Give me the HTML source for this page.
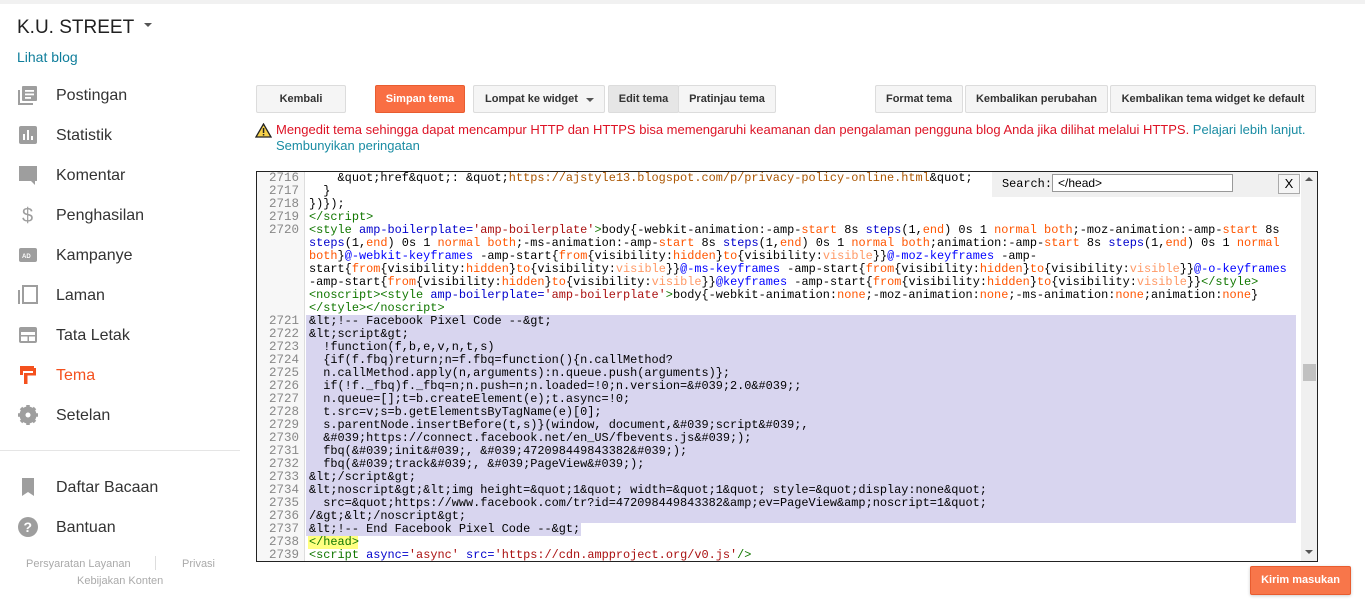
<!DOCTYPE html>
<html><head><meta charset="utf-8">
<style>
*{margin:0;padding:0;box-sizing:border-box}
body{width:1365px;height:599px;overflow:hidden;background:#fff;font-family:"Liberation Sans",Arial,sans-serif;position:relative}
.topstrip{position:absolute;left:0;top:0;width:1365px;height:4px;background:#f1f1f1}
.brand{position:absolute;left:17px;top:17px;font-size:19px;color:#212121}
.brand .car{display:inline-block;margin-left:10px;vertical-align:middle;width:0;height:0;border-left:4px solid transparent;border-right:4px solid transparent;border-top:4px solid #555;position:relative;top:-3px}
.lihat{position:absolute;left:17px;top:49px;font-size:14px;color:#0f7e9b}
.nav{position:absolute;left:0;width:240px;height:40px}
.nav svg{position:absolute;left:18px;top:10px}
.nav span{position:absolute;left:56px;top:12px;font-size:16px;color:#333}
.div{position:absolute;left:0;top:450px;width:240px;height:1px;background:#e5e5e5}
.foot{position:absolute;font-size:11px;color:#aaa}
.btn{position:absolute;top:85px;height:28px;border:1px solid #dcdcdc;border-radius:2px;background:#f5f5f5;font-size:11px;font-weight:bold;color:#333;text-align:center;line-height:26px}
.warn{position:absolute;left:276px;top:122px;font-size:13px;color:#dd1426;line-height:16px}
.warn a{color:#1a8ca3}
.code{position:absolute;left:256px;top:171px;width:1062px;height:391px;border:1px solid #222;overflow:hidden;background:#fff}
.gut{position:absolute;left:0;top:0;width:48px;height:100%;background:#f7f7f7;border-right:1px solid #ddd}
.ln{position:absolute;left:0;width:42px;text-align:right;font-family:"Liberation Mono",monospace;font-size:12.5px;color:#888;height:13px;line-height:13px}
.row{position:absolute;left:52px;font-family:"Liberation Mono",monospace;font-size:11.9px;line-height:13px;height:13px;white-space:pre;color:#000}
.hl{position:absolute;left:49px;top:143px;width:990px;height:208px;background:#d8d5ef}
.hl2{position:absolute;left:49px;top:351px;width:275px;height:13px;background:#d8d5ef}
.yl{position:absolute;left:51px;top:364px;width:50px;height:13px;background:#ffff80}
.t{color:#170}.a{color:#00c}.s{color:#a11}.o{color:#f50}.v{color:#f96}.b{color:#00f}.br{color:#a50}
.sb{position:absolute;right:0;top:0;width:16px;height:100%;background:#f0f0f0}
.search{position:absolute;left:735px;top:0;width:308px;height:25px;background:#f0f0f0}
</style></head><body>
<div class="topstrip"></div>
<div class="brand">K.U. STREET<span class="car"></span></div>
<div class="lihat">Lihat blog</div>

<div class="nav" style="top:75px"><svg width="20" height="20" viewBox="0 0 20 20"><rect x="4" y="1" width="15" height="15" rx="1" fill="#9e9e9e"/><rect x="7" y="5" width="9" height="1.8" fill="#fff"/><rect x="7" y="8.5" width="9" height="1.8" fill="#fff"/><rect x="7" y="12" width="6" height="1.8" fill="#fff"/><path d="M1 5v14h14" stroke="#9e9e9e" stroke-width="2" fill="none"/></svg><span>Postingan</span></div>
<div class="nav" style="top:115px"><svg width="20" height="20" viewBox="0 0 20 20"><rect x="1" y="1" width="18" height="18" rx="2" fill="#9e9e9e"/><rect x="5" y="9" width="2" height="6" fill="#fff"/><rect x="9" y="5" width="2" height="10" fill="#fff"/><rect x="13" y="11" width="2" height="4" fill="#fff"/></svg><span>Statistik</span></div>
<div class="nav" style="top:155px"><svg width="20" height="20" viewBox="0 0 20 20"><path d="M1 1h18v15h-2v4l-4-4H1z" fill="#9e9e9e"/></svg><span>Komentar</span></div>
<div class="nav" style="top:195px"><svg width="20" height="20" viewBox="0 0 20 20"><text x="4" y="17" font-size="20" fill="#9e9e9e" font-family="Liberation Sans">$</text></svg><span>Penghasilan</span></div>
<div class="nav" style="top:235px"><svg width="20" height="20" viewBox="0 0 20 20"><rect x="1" y="3" width="18" height="14" rx="2" fill="#9e9e9e"/><text x="4" y="13" font-size="6" font-weight="bold" fill="#fff" font-family="Liberation Sans">AD</text></svg><span>Kampanye</span></div>
<div class="nav" style="top:275px"><svg width="20" height="20" viewBox="0 0 20 20"><rect x="5" y="1" width="14" height="17" fill="none" stroke="#9e9e9e" stroke-width="2"/><path d="M1 5v14" stroke="#9e9e9e" stroke-width="2"/></svg><span>Laman</span></div>
<div class="nav" style="top:315px"><svg width="20" height="20" viewBox="0 0 20 20"><rect x="1" y="2" width="18" height="16" rx="2" fill="#9e9e9e"/><rect x="3" y="7" width="14" height="9" fill="#fff"/><rect x="9.5" y="10" width="1.5" height="6" fill="#9e9e9e"/><rect x="3" y="10" width="14" height="1.5" fill="#9e9e9e"/></svg><span>Tata Letak</span></div>
<div class="nav" style="top:355px"><svg width="20" height="20" viewBox="0 0 20 20"><rect x="2" y="1" width="14" height="5" fill="#f4511e"/><rect x="15" y="3" width="3" height="7" fill="#f4511e"/><rect x="6" y="8" width="12" height="2.5" fill="#f4511e"/><rect x="6" y="8" width="3.5" height="11" fill="#f4511e"/><rect x="2" y="1" width="3" height="9" fill="#f4511e"/></svg><span style="color:#f4511e">Tema</span></div>
<div class="nav" style="top:395px"><svg width="20" height="20" viewBox="0 0 20 20"><circle cx="10" cy="10" r="6.5" fill="none" stroke="#9e9e9e" stroke-width="4"/><path d="M10 0v20M0 10h20M3 3l14 14M17 3L3 17" stroke="#9e9e9e" stroke-width="3.5"/><circle cx="10" cy="10" r="4.5" fill="#9e9e9e"/><circle cx="10" cy="10" r="2.5" fill="#fff"/></svg><span>Setelan</span></div>
<div class="div"></div>
<div class="nav" style="top:467px"><svg width="20" height="20" viewBox="0 0 20 20"><path d="M4 1h12v18l-6-4-6 4z" fill="#9e9e9e"/></svg><span>Daftar Bacaan</span></div>
<div class="nav" style="top:507px"><svg width="20" height="20" viewBox="0 0 20 20"><circle cx="10" cy="10" r="10" fill="#9e9e9e"/><text x="5.5" y="15" font-size="14" font-weight="bold" fill="#fff" font-family="Liberation Sans">?</text></svg><span>Bantuan</span></div>
<div class="foot" style="left:26px;top:558px">Persyaratan Layanan</div>
<div style="position:absolute;left:155px;top:556px;width:1px;height:14px;background:#ddd"></div>
<div class="foot" style="left:182px;top:558px">Privasi</div>
<div class="foot" style="left:77px;top:575px">Kebijakan Konten</div>

<div class="btn" style="left:256px;width:90px">Kembali</div>
<div class="btn" style="left:375px;width:90px;background:#f96e43;border-color:#e85c2f;color:#fff">Simpan tema</div>
<div class="btn" style="left:473px;width:132px;text-align:left;padding-left:11px">Lompat ke widget<span style="position:absolute;right:10px;top:12px;border-left:4px solid transparent;border-right:4px solid transparent;border-top:4px solid #555"></span></div>
<div class="btn" style="left:608px;width:71px;background:#e6e6e6">Edit tema</div>
<div class="btn" style="left:678px;width:98px">Pratinjau tema</div>
<div class="btn" style="left:875px;width:88px">Format tema</div>
<div class="btn" style="left:965px;width:143px">Kembalikan perubahan</div>
<div class="btn" style="left:1110px;width:206px">Kembalikan tema widget ke default</div>

<svg style="position:absolute;left:255px;top:123px" width="17" height="15" viewBox="0 0 17 15"><path d="M8.5 1L16 14H1z" fill="#f7d24a" stroke="#222" stroke-width="1.3"/><rect x="7.8" y="5" width="1.5" height="5" fill="#222"/><rect x="7.8" y="11" width="1.5" height="1.5" fill="#222"/></svg>
<div class="warn">Mengedit tema sehingga dapat mencampur HTTP dan HTTPS bisa memengaruhi keamanan dan pengalaman pengguna blog Anda jika dilihat melalui HTTPS. <a>Pelajari lebih lanjut.</a><br><a>Sembunyikan peringatan</a></div>

<div class="code">
<div class="gut"></div>
<div class="hl"></div><div class="hl2"></div><div class="yl"></div>
<div class="ln" style="top:0">2716</div><div class="ln" style="top:13px">2717</div><div class="ln" style="top:26px">2718</div><div class="ln" style="top:39px">2719</div><div class="ln" style="top:52px">2720</div>
<div class="ln" style="top:143px">2721</div><div class="ln" style="top:156px">2722</div><div class="ln" style="top:169px">2723</div><div class="ln" style="top:182px">2724</div><div class="ln" style="top:195px">2725</div><div class="ln" style="top:208px">2726</div><div class="ln" style="top:221px">2727</div><div class="ln" style="top:234px">2728</div><div class="ln" style="top:247px">2729</div><div class="ln" style="top:260px">2730</div><div class="ln" style="top:273px">2731</div><div class="ln" style="top:286px">2732</div><div class="ln" style="top:299px">2733</div><div class="ln" style="top:312px">2734</div><div class="ln" style="top:325px">2735</div><div class="ln" style="top:338px">2736</div><div class="ln" style="top:351px">2737</div><div class="ln" style="top:364px">2738</div><div class="ln" style="top:377px">2739</div>
<div class="row" style="top:0">    &amp;quot;href&amp;quot;: &amp;quot;<span class="br">https://ajstyle13.blogspot.com/p/privacy-policy-online.html</span>&amp;quot;</div>
<div class="row" style="top:13px">  }</div>
<div class="row" style="top:26px">})});</div>
<div class="row" style="top:39px"><span class="t">&lt;/script&gt;</span></div>
<div class="row" style="top:52px"><span class="t">&lt;style</span> <span class="a">amp-boilerplate=</span><span class="s">'amp-boilerplate'</span><span class="t">&gt;</span>body{-webkit-animation:-amp-<span class="o">start</span> 8s <span class="a">steps</span>(1,<span class="o">end</span>) 0s 1 <span class="o">normal both</span>;-moz-animation:-amp-<span class="o">start</span> 8s</div>
<div class="row" style="top:65px"><span class="a">steps</span>(1,<span class="o">end</span>) 0s 1 <span class="o">normal both</span>;-ms-animation:-amp-<span class="o">start</span> 8s <span class="a">steps</span>(1,<span class="o">end</span>) 0s 1 <span class="o">normal both</span>;animation:-amp-<span class="o">start</span> 8s <span class="a">steps</span>(1,<span class="o">end</span>) 0s 1 <span class="o">normal</span></div>
<div class="row" style="top:78px"><span class="o">both</span>}<span class="b">@-webkit-keyframes</span> -amp-start{<span class="o">from</span>{visibility:<span class="o">hidden</span>}<span class="o">to</span>{visibility:<span class="v">visible</span>}}<span class="b">@-moz-keyframes</span> -amp-</div>
<div class="row" style="top:91px">start{<span class="o">from</span>{visibility:<span class="o">hidden</span>}<span class="o">to</span>{visibility:<span class="v">visible</span>}}<span class="b">@-ms-keyframes</span> -amp-start{<span class="o">from</span>{visibility:<span class="o">hidden</span>}<span class="o">to</span>{visibility:<span class="v">visible</span>}}<span class="b">@-o-keyframes</span></div>
<div class="row" style="top:104px">-amp-start{<span class="o">from</span>{visibility:<span class="o">hidden</span>}<span class="o">to</span>{visibility:<span class="v">visible</span>}}<span class="b">@keyframes</span> -amp-start{<span class="o">from</span>{visibility:<span class="o">hidden</span>}<span class="o">to</span>{visibility:<span class="v">visible</span>}}<span class="t">&lt;/style&gt;</span></div>
<div class="row" style="top:117px"><span class="t">&lt;noscript&gt;&lt;style</span> <span class="a">amp-boilerplate=</span><span class="s">'amp-boilerplate'</span><span class="t">&gt;</span>body{-webkit-animation:<span class="o">none</span>;-moz-animation:<span class="o">none</span>;-ms-animation:<span class="o">none</span>;animation:<span class="o">none</span>}</div>
<div class="row" style="top:130px"><span class="t">&lt;/style&gt;&lt;/noscript&gt;</span></div>
<div class="row" style="top:143px">&amp;lt;!-- Facebook Pixel Code --&amp;gt;</div>
<div class="row" style="top:156px">&amp;lt;script&amp;gt;</div>
<div class="row" style="top:169px">  !function(f,b,e,v,n,t,s)</div>
<div class="row" style="top:182px">  {if(f.fbq)return;n=f.fbq=function(){n.callMethod?</div>
<div class="row" style="top:195px">  n.callMethod.apply(n,arguments):n.queue.push(arguments)};</div>
<div class="row" style="top:208px">  if(!f._fbq)f._fbq=n;n.push=n;n.loaded=!0;n.version=&amp;#039;2.0&amp;#039;;</div>
<div class="row" style="top:221px">  n.queue=[];t=b.createElement(e);t.async=!0;</div>
<div class="row" style="top:234px">  t.src=v;s=b.getElementsByTagName(e)[0];</div>
<div class="row" style="top:247px">  s.parentNode.insertBefore(t,s)}(window, document,&amp;#039;script&amp;#039;,</div>
<div class="row" style="top:260px">  &amp;#039;https://connect.facebook.net/en_US/fbevents.js&amp;#039;);</div>
<div class="row" style="top:273px">  fbq(&amp;#039;init&amp;#039;, &amp;#039;472098449843382&amp;#039;);</div>
<div class="row" style="top:286px">  fbq(&amp;#039;track&amp;#039;, &amp;#039;PageView&amp;#039;);</div>
<div class="row" style="top:299px">&amp;lt;/script&amp;gt;</div>
<div class="row" style="top:312px">&amp;lt;noscript&amp;gt;&amp;lt;img height=&amp;quot;1&amp;quot; width=&amp;quot;1&amp;quot; style=&amp;quot;display:none&amp;quot;</div>
<div class="row" style="top:325px">  src=&amp;quot;https://www.facebook.com/tr?id=472098449843382&amp;amp;ev=PageView&amp;amp;noscript=1&amp;quot;</div>
<div class="row" style="top:338px">/&amp;gt;&amp;lt;/noscript&amp;gt;</div>
<div class="row" style="top:351px">&amp;lt;!-- End Facebook Pixel Code --&amp;gt;</div>
<div class="row" style="top:364px"><span class="t">&lt;/head&gt;</span></div>
<div class="row" style="top:377px"><span class="t">&lt;script</span> <span class="a">async=</span><span class="s">'async'</span> <span class="a">src=</span><span class="s">'https://cdn.ampproject.org/v0.js'</span><span class="t">/&gt;</span></div>
<div class="search">
<span style="position:absolute;left:10px;top:5px;font-family:'Liberation Mono',monospace;font-size:11.9px">Search:</span>
<div style="position:absolute;left:60px;top:2px;width:181px;height:18px;background:#fff;border:1px solid #999;font-size:12px;padding-left:5px;line-height:16px">&lt;/head&gt;</div>
<div style="position:absolute;left:286px;top:2px;width:22px;height:20px;background:#f5f5f5;border:1px solid #aaa;font-size:13px;text-align:center;line-height:18px">X</div>
</div>
<div class="sb">
<div style="position:absolute;left:4px;top:5px;border-left:4px solid transparent;border-right:4px solid transparent;border-bottom:4px solid #555"></div>
<div style="position:absolute;left:2px;top:192px;width:13px;height:17px;background:#c1c1c1"></div>
<div style="position:absolute;left:4px;top:378px;border-left:4px solid transparent;border-right:4px solid transparent;border-top:4px solid #555"></div>
</div>
</div>

<div style="position:absolute;left:1250px;top:566px;width:101px;height:29px;background:#f8764a;border:1px solid #e85c2f;border-radius:2px;color:#fff;font-size:11px;font-weight:bold;text-align:center;line-height:27px;box-shadow:0 1px 3px rgba(0,0,0,.2)">Kirim masukan</div>
</body></html>
